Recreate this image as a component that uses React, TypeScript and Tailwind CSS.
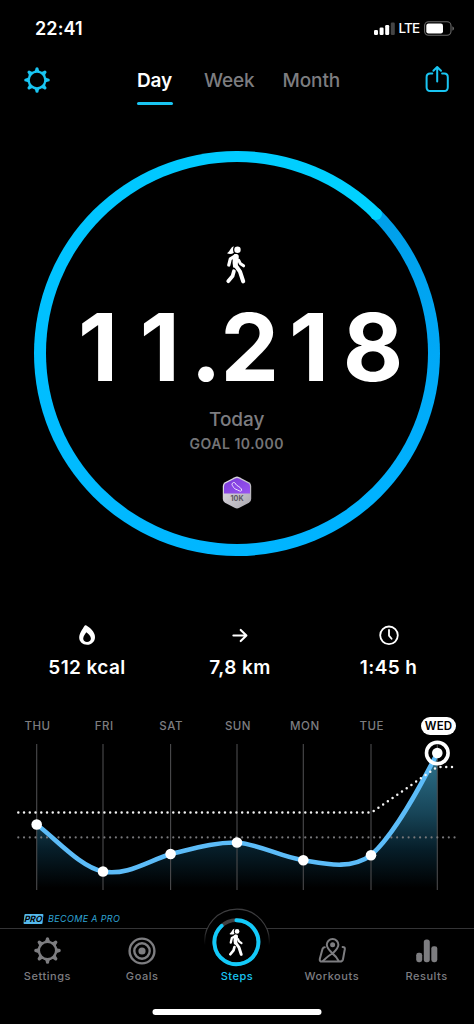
const days = ['THU', 'FRI', 'SAT', 'SUN', 'MON', 'TUE', 'WED']

const points = [
  { x: 36.7, y: 84.5 },
  { x: 103, y: 131.5 },
  { x: 170.6, y: 114 },
  { x: 237, y: 102.5 },
  { x: 303.3, y: 120.2 },
  { x: 371, y: 115.3 },
  { x: 437.3, y: 13 },
]

const curve =
  'M36.7 84.5C55 98 80 127 103 131.5C127 136 148 121 170.6 114C192 109 214 102 237 102.5C260 104.5 281 117 303.3 120.2C326 124 350 130 371 115.3C395 94 420 47 437.3 13'

function Gear({ className }: { className?: string }) {
  return (
    <svg viewBox="-13 -13 26 26" className={className}>
      <circle r="8.3" fill="none" stroke="currentColor" strokeWidth="2.2" />
      {[0, 45, 90, 135, 180, 225, 270, 315].map((a) => (
        <path
          key={a}
          transform={`rotate(${a})`}
          d="M-3.6 -8.4C-2 -9.2 -1.7 -10 -1.6 -11.2A1.6 1.6 0 0 1 1.6 -11.2C1.7 -10 2 -9.2 3.6 -8.4Z"
          fill="currentColor"
        />
      ))}
    </svg>
  )
}

function Walker({ className }: { className?: string }) {
  return (
    <svg viewBox="0 0 22 40" className={className} fill="none" stroke="white" strokeLinecap="round" strokeLinejoin="round">
      <circle cx="12.5" cy="4.7" r="3.2" fill="white" stroke="none" />
      <path d="M8.8 1.2C5.5 2 5.8 5.6 2 8.2C4.2 9.4 7 9.2 8.8 7.8C7.8 5.6 7.8 3.4 8.8 1.2Z" fill="white" stroke="none" />
      <path d="M9 9.4C10.4 8.8 13 9 13.6 10.6C14.3 13 12.8 16.5 12.8 19.6L12.4 23L8.2 22.4L7.6 18L7.8 13Z" fill="white" stroke="none" />
      <path d="M10.2 11L5.3 13.8L3.8 20" strokeWidth="3.2" />
      <path d="M13.8 15.4L15.2 18.4L18.6 20.8" strokeWidth="3" />
      <path d="M10.3 20L15 26.6L18.2 36.4" strokeWidth="4.1" />
      <path d="M8.9 26.2L7.6 31L3.2 36.2" strokeWidth="3.7" />
    </svg>
  )
}

function StatusBar() {
  return (
    <div className="h-14 flex pl-[35px] pr-[19.5px] justify-between">
      <span className="mt-[17px] text-[18px] leading-6 font-semibold tracking-[0.1px]">22:41</span>
      <div className="flex items-center h-6 mt-[16px]">
        <svg className="w-[21px] h-[13px]" viewBox="0 0 21 13" fill="white">
          <rect x="0" y="8" width="4" height="5" rx="1.2" />
          <rect x="5.6" y="5.5" width="4" height="7.5" rx="1.2" />
          <rect x="11.2" y="3" width="4" height="10" rx="1.2" />
          <rect x="16.8" y="0.5" width="4" height="12.5" rx="1.2" fill="#444" />
        </svg>
        <span className="ml-[4px] mt-[1px] w-[21px] text-[13.5px] font-medium tracking-[-0.8px]">LTE</span>
        <svg className="ml-[4px] w-[31px] h-[15px]" viewBox="0 0 31 15">
          <rect x="0.6" y="0.8" width="26.4" height="13.4" rx="4" fill="none" stroke="#6a6a6a" strokeWidth="1.1" />
          <rect x="2.3" y="2.5" width="16.7" height="10" rx="2.2" fill="white" />
          <path d="M28.4 5.3C30.6 6.3 30.6 8.7 28.4 9.7Z" fill="#6a6a6a" />
        </svg>
      </div>
    </div>
  )
}

function Header() {
  return (
    <div className="h-[64px] flex items-start pl-[23.5px] pr-[24px] text-[19px] leading-6 font-medium text-[#7d7d80]">
      <Gear className="w-[26px] h-[26px] mt-[10.5px] text-[#19c5f2]" />
      <div className="ml-[87.5px] mt-[13px] w-[36px]">
        <div className="font-semibold tracking-[-0.2px] text-white">Day</div>
        <div className="mt-[9px] h-[2.5px] rounded-full bg-[#19c5f2]" />
      </div>
      <span className="ml-[31px] mt-[13px] w-[50px] tracking-[-0.1px]">Week</span>
      <span className="ml-[28.5px] mt-[13px] tracking-[-0.1px]">Month</span>
      <svg className="ml-auto mt-[9px] w-[26px] h-[28px] text-[#19c5f2]" viewBox="0 0 26 28" fill="none" stroke="currentColor" strokeWidth="2" strokeLinecap="round" strokeLinejoin="round">
        <path d="M8.3 8.6H6.2C4 8.6 2.6 10 2.6 12.2V22.2C2.6 24.6 4 26 6.2 26H20.2C22.4 26 23.8 24.6 23.8 22.2V12.2C23.8 10 22.4 8.6 20.2 8.6H18.1" />
        <path d="M13.2 16.5V2.4M9.4 5.8L13.2 2L17 5.8" />
      </svg>
    </div>
  )
}

function StepRing() {
  return (
    <div className="relative mt-[30.5px] ml-[34px] w-[405.5px] h-[405px] rounded-full p-[11.5px] bg-[conic-gradient(from_45deg,#009fe9_0deg,#00a6f4_35deg,#00b2ff_90deg,#00b9ff_180deg,#00c4ff_260deg,#00d2ff_360deg)]">
      <div className="w-full h-full rounded-full bg-black flex flex-col items-center">
        <Walker className="w-[22px] h-[40px] mt-[82.5px] -ml-[2px]" />
        <div className="mt-[12px] h-[100px] flex text-[93px] leading-[100px] font-bold text-center whitespace-nowrap">
          <span className="w-[62px]">1</span>
          <span className="w-[61.5px]">1</span>
          <span className="w-[30px]">.</span>
          <span className="w-[58px]">2</span>
          <span className="w-[61px]">1</span>
          <span className="w-[67px]">8</span>
        </div>
        <div className="mt-[11px] text-[19px] leading-6 font-medium text-[#7d7d80]">Today</div>
        <div className="mt-[2px] text-[14px] leading-5 font-semibold tracking-[0.5px] text-[#747476]">GOAL 10.000</div>
        <svg className="mt-[22px] w-[30px] h-[33px]" viewBox="0 0 30 33">
          <defs>
            <linearGradient id="silver" x1="0" y1="0" x2="1" y2="1">
              <stop offset="0" stopColor="#e5e1ea" />
              <stop offset="1" stopColor="#a9a7ae" />
            </linearGradient>
            <linearGradient id="violet" x1="0" y1="0" x2="1" y2="1">
              <stop offset="0" stopColor="#7a3ad8" />
              <stop offset="1" stopColor="#9a55f2" />
            </linearGradient>
          </defs>
          <path d="M12.6 1.2Q15 0 17.4 1.2L27 6.3Q29.2 7.6 29.2 10V23Q29.2 25.4 27 26.7L17.4 31.8Q15 33 12.6 31.8L3 26.7Q0.8 25.4 0.8 23V10Q0.8 7.6 3 6.3Z" fill="url(#silver)" />
          <path d="M13 2.4Q15 1.4 17 2.4L26.2 7.3Q28 8.4 28 10.4V17.6H2V10.4Q2 8.4 3.8 7.3Z" fill="url(#violet)" />
          <path d="M10.4 7.2C11.8 5.8 13 6.4 13.6 8C14.4 9.8 17.8 10.4 19.4 13C20.4 15 18.6 15.8 17.2 14.8C15 13.4 12.6 13.4 11.6 11.4C10.8 9.8 9.2 8.8 10.4 7.2Z" fill="none" stroke="#efe2ff" strokeWidth="1" />
          <text x="15" y="25" textAnchor="middle" fontSize="7.2" fontWeight="700" fontFamily="Inter, sans-serif" fill="#5b5763">10K</text>
        </svg>
      </div>
      {/* leading edge of the progress stroke */}
      <div className="absolute left-[336.2px] top-[57.6px] w-[11.5px] h-[11.5px] rounded-full bg-[#00d2ff]" />
    </div>
  )
}

function Stats() {
  return (
    <div className="mt-[67px] h-[60px] ml-[12px] grid grid-cols-[150px_156px_141px] text-[19px] leading-6 font-semibold tracking-[0.4px]">
      <div className="flex flex-col items-center">
        <svg className="w-[24px] h-[24px]" viewBox="0 0 24 24">
          <path fill="white" fillRule="evenodd" d="M9.4 3C9.8 2.2 10.6 2.1 11.4 2.6C15.2 4.8 20 9.2 20 14C20 18.6 16.6 21.8 12.1 21.8C7.6 21.8 4.2 18.8 4.2 14.6C4.2 10.2 7.4 6.6 9.4 3ZM11.2 9.2C10.6 10.8 8.2 13 8.2 15.6C8.2 17.9 9.9 19.1 12 19.1C14.2 19.1 15.9 17.8 15.9 15.6C15.9 12.8 13.4 10.8 11.2 9.2Z" />
        </svg>
        <span className="mt-[9px]">512 kcal</span>
      </div>
      <div className="flex flex-col items-center">
        <svg className="w-[24px] h-[24px]" viewBox="0 0 24 24" fill="none" stroke="white" strokeWidth="2.1" strokeLinecap="round" strokeLinejoin="round">
          <path d="M5.4 12.5H18.2M12.7 6.9L18.4 12.5L12.7 18.1" />
        </svg>
        <span className="mt-[9px]">7,8 km</span>
      </div>
      <div className="flex flex-col items-center">
        <svg className="w-[24px] h-[24px]" viewBox="0 0 24 24" fill="none" stroke="white" strokeWidth="1.8" strokeLinecap="round" strokeLinejoin="round">
          <circle cx="12" cy="12.3" r="8.8" />
          <path d="M12 7V12.6L14.6 15.8" />
        </svg>
        <span className="mt-[9px]">1:45 h</span>
      </div>
    </div>
  )
}

function WeekChart() {
  return (
    <div className="mt-[34px]">
      <div className="ml-[4px] w-[468px] h-[19px] grid grid-cols-7 items-center justify-items-center text-[11.5px] font-medium tracking-[0.5px] text-[#7d7d80]">
        {days.map((day) => (
          <span key={day} className={day === 'WED' ? 'w-[35px] h-[18px] rounded-full bg-white text-black text-center leading-[18px] font-semibold tracking-[0.2px]' : 'pt-[1px]'}>
            {day}
          </span>
        ))}
      </div>
      <svg className="mt-[4px] w-[474px] h-[155px] block" viewBox="0 0 474 155" fill="none">
        <defs>
          <linearGradient id="area" gradientUnits="userSpaceOnUse" x1="0" y1="13" x2="0" y2="148">
            <stop offset="0" stopColor="#2f7691" />
            <stop offset="0.45" stopColor="#174457" />
            <stop offset="0.72" stopColor="#061d28" />
            <stop offset="1" stopColor="#000000" />
          </linearGradient>
        </defs>
        <path d={`${curve}V150H36.7Z`} fill="url(#area)" />
        {points.map((p) => (
          <path key={p.x} d={`M${p.x} 4V150`} stroke="#4b4b4d" strokeWidth="1.1" />
        ))}
        <path d="M18.3 97.4H455" stroke="#77777a" strokeWidth="2.2" strokeLinecap="round" strokeDasharray="0 5.74" />
        <path d={curve} stroke="#5cbcf8" strokeWidth="4.6" strokeLinecap="round" />
        <path d="M18.3 72.6H371.5L435 28.5Q437.5 27 440 27H453" stroke="#f2f2f2" strokeWidth="2.5" strokeLinecap="round" strokeDasharray="0 5.74" />
        {points.slice(0, 6).map((p) => (
          <circle key={p.x} cx={p.x} cy={p.y} r="5.3" fill="white" />
        ))}
        <circle cx="437.3" cy="13" r="10.8" stroke="white" strokeWidth="3.6" />
        <circle cx="437.3" cy="13" r="5.3" fill="white" />
      </svg>
    </div>
  )
}

function TabBar() {
  return (
    <div className="relative border-t border-[#343436] grid grid-cols-5 h-[96px] text-[11px] leading-4 font-medium tracking-[0.55px] text-[#7d7d80]">
      <div className="flex flex-col items-center">
        <Gear className="mt-[8px] w-[27px] h-[27px]" />
        <span className="mt-[4px]">Settings</span>
      </div>
      <div className="flex flex-col items-center">
        <svg className="mt-[7.5px] w-[28px] h-[28px]" viewBox="-14 -14 28 28" fill="none" stroke="currentColor" strokeWidth="2.4">
          <circle r="12.4" />
          <circle r="7.7" />
          <circle r="3.6" fill="currentColor" stroke="none" />
        </svg>
        <span className="mt-[3.5px]">Goals</span>
      </div>
      <div className="relative flex flex-col items-center justify-start text-[#19c5f2]">
        <div className="absolute -top-[20px] left-1/2 -translate-x-1/2 w-[66px] h-[60px]">
          <svg className="w-[66px] h-[60px] overflow-visible" viewBox="0 0 66 60" fill="none">
            <defs>
              <linearGradient id="bump" x1="0" y1="0" x2="0" y2="1">
                <stop offset="0.6" stopColor="#3c3c3e" />
                <stop offset="1" stopColor="#000000" />
              </linearGradient>
            </defs>
            <path d="M0.9 36A32.3 32.3 0 1 1 65.1 36" fill="black" stroke="url(#bump)" strokeWidth="1.1" />
            <circle cx="32.4" cy="33.2" r="22" stroke="#404042" strokeWidth="3.8" />
            <path d="M32.4 11.2A22 22 0 1 1 17.6 16.9" stroke="#12cafa" strokeWidth="3.9" strokeLinecap="round" />
          </svg>
          <Walker className="absolute left-[24.5px] top-[18.5px] w-[16px] h-[29px]" />
        </div>
        <span className="mt-[39px]">Steps</span>
      </div>
      <div className="flex flex-col items-center">
        <svg className="mt-[8px] w-[28px] h-[27px]" viewBox="0 0 28 27" fill="none" stroke="currentColor" strokeWidth="2" strokeLinecap="round" strokeLinejoin="round">
          <path d="M14.6 16.6C11.4 13.4 8.8 11 8.8 7.8A5.8 5.8 0 0 1 20.4 7.8C20.4 11 17.8 13.4 14.6 16.6Z" />
          <circle cx="14.6" cy="7.8" r="1.5" fill="currentColor" />
          <path d="M6.8 10.2C5.6 10.2 5 10.8 4.5 12L1.9 21.6C1.4 23.5 2.2 24.6 4 24.6H22C23.6 24.6 24.6 23.8 25 22.2L26.8 12.2C27 10.6 26.3 10 24.6 10" />
          <path d="M14.6 16.6C11.5 17.6 8.4 20.6 5 24M14.6 16.6C17.2 18.6 19.2 21 20.6 24" />
        </svg>
        <span className="mt-[4px]">Workouts</span>
      </div>
      <div className="flex flex-col items-center">
        <svg className="mt-[8px] w-[22px] h-[27px]" viewBox="0 0 22 27" fill="currentColor">
          <rect x="0.2" y="15.8" width="6" height="9.4" rx="2.4" />
          <rect x="7.8" y="2.4" width="6" height="22.8" rx="2.6" />
          <rect x="15.3" y="9.2" width="6" height="16" rx="2.4" />
        </svg>
        <span className="mt-[4px]">Results</span>
      </div>
      <div className="absolute bottom-[9px] left-1/2 -translate-x-1/2 w-[169px] h-[6px] rounded-full bg-white" />
    </div>
  )
}

export default function App() {
  return (
    <div className="w-[474px] h-[1024px] bg-black text-white flex flex-col overflow-hidden font-['Inter',sans-serif]">
      <StatusBar />
      <Header />
      <StepRing />
      <Stats />
      <WeekChart />
      <div className="mt-auto mb-[3px] h-[12px] flex items-center pl-[24px] text-[9px] italic text-[#2fa5d6]">
        <span className="w-[19px] h-[9.5px] -skew-x-6 rounded-[1px] bg-[#55b9ec] text-black font-bold text-[8.5px] leading-[10px] text-center">PRO</span>
        <span className="ml-[5px] tracking-[0.35px] whitespace-nowrap">BECOME A PRO</span>
      </div>
      <TabBar />
    </div>
  )
}
